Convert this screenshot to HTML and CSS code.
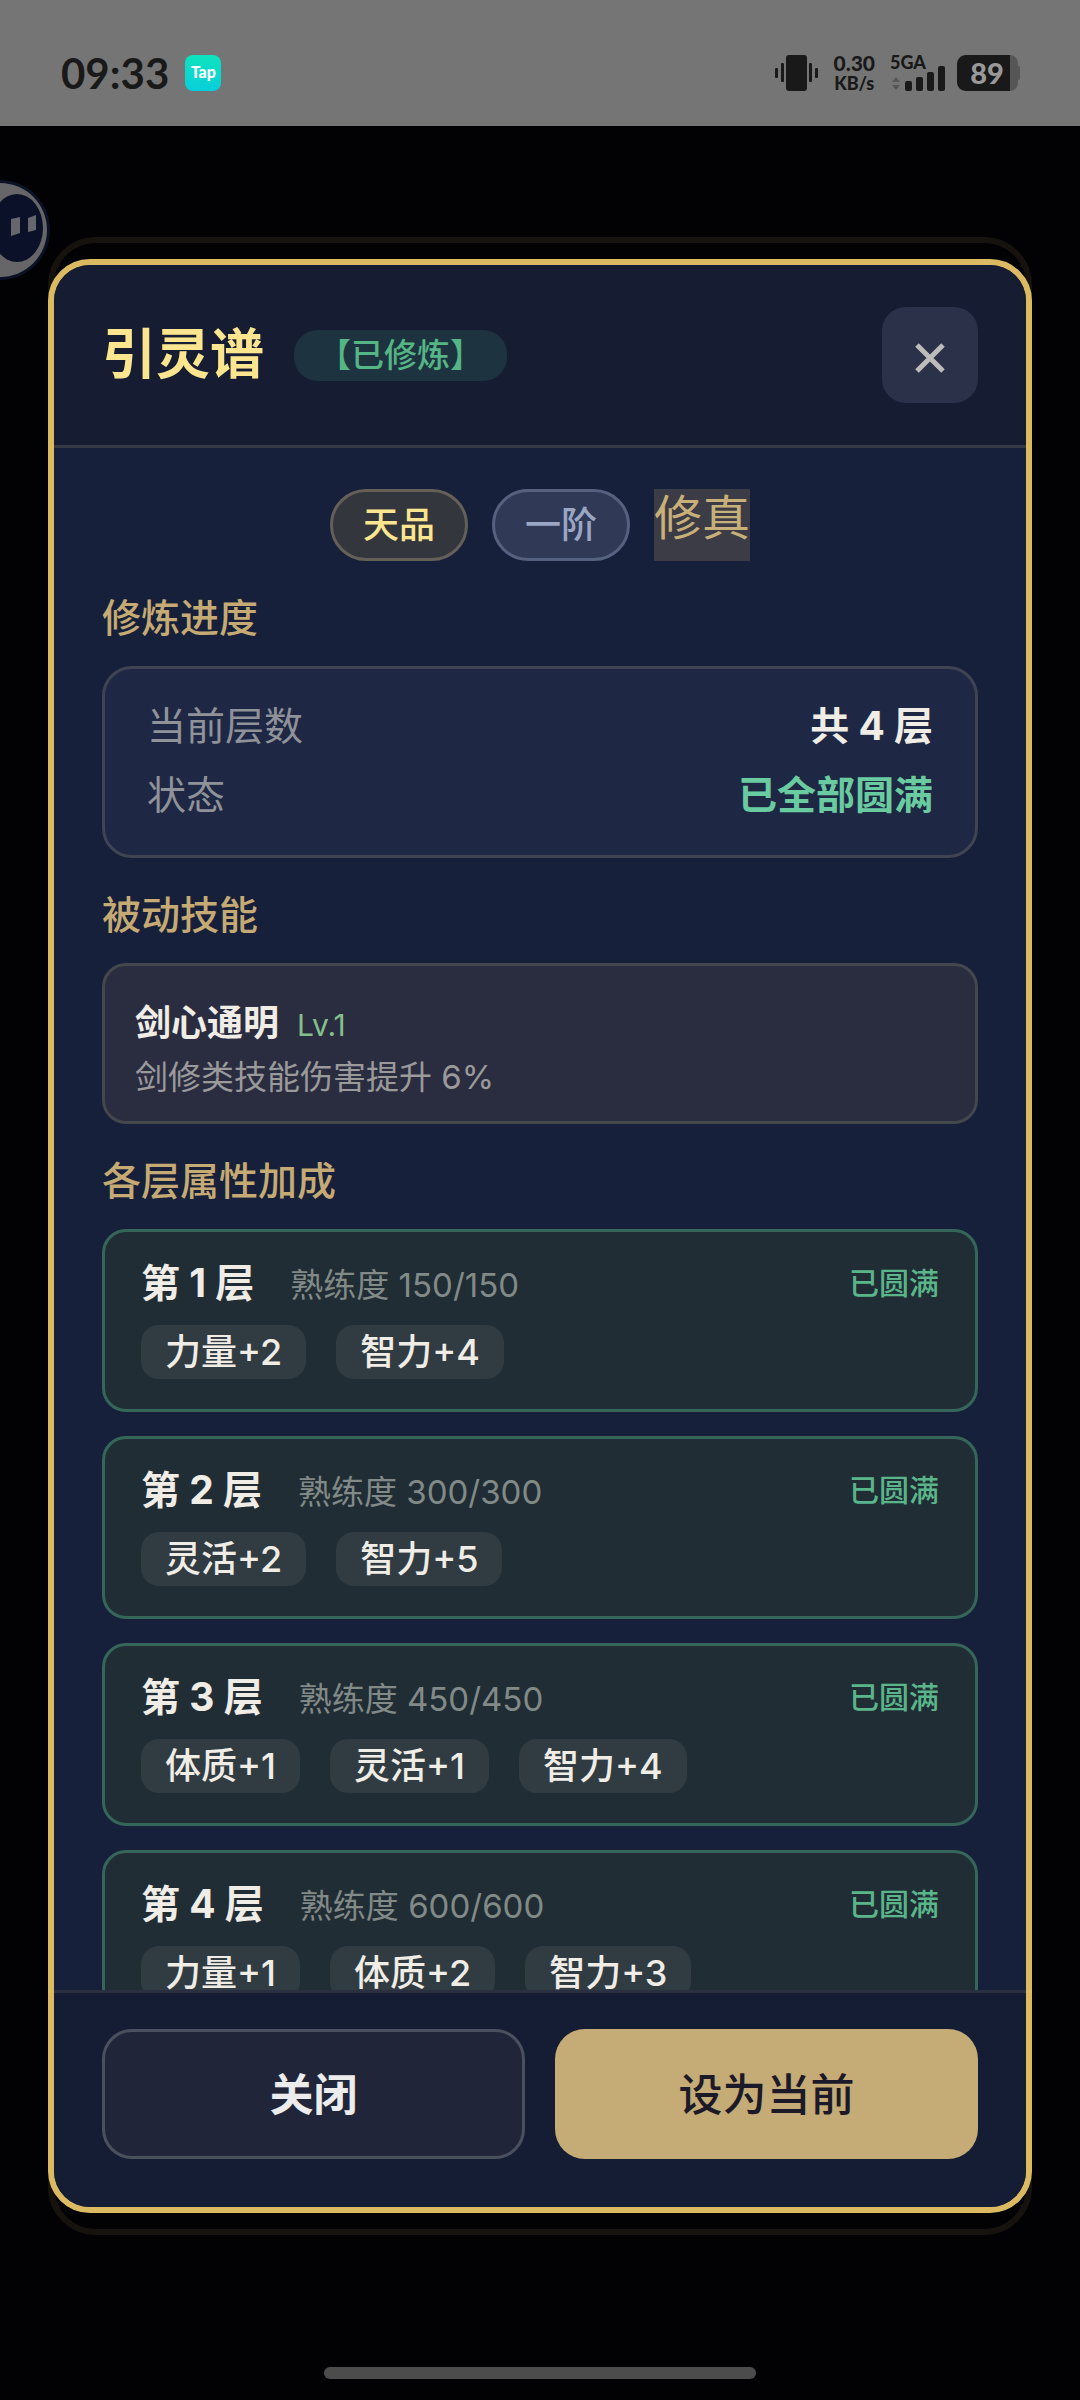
FILE: index.html
```html
<!DOCTYPE html>
<html lang="zh-CN">
<head>
<meta charset="utf-8">
<meta name="viewport" content="width=device-width, initial-scale=1">
<title>引灵谱</title>
<link rel="stylesheet" href="styles.css">
</head>
<body>
<div class="app">
  <header class="status">
    <div class="status-left">
      <time class="clock">09:33</time>
      <span class="tap">Tap</span>
    </div>
    <div class="status-right">
      <svg class="vibrate" width="44" height="36" viewBox="0 0 44 36" aria-hidden="true">
        <rect x="11" y="0" width="21" height="36" rx="3"/>
        <rect x="6" y="8" width="3" height="19" rx="1"/>
        <rect x="0" y="13" width="3" height="10" rx="1"/>
        <rect x="34" y="8" width="3" height="19" rx="1"/>
        <rect x="40" y="13" width="3" height="10" rx="1"/>
      </svg>
      <div class="speed"><span class="speed-value">0.30</span><span class="speed-unit">KB/s</span></div>
      <div class="signal">
        <span class="network">5GA</span>
        <svg width="56" height="36" viewBox="0 0 56 36" aria-hidden="true">
          <path class="dim" d="M6 22l4 5H2zM6 35l4-5H2z"/>
          <rect x="15" y="26" width="7" height="10" rx="2"/>
          <rect x="26" y="22" width="7" height="14" rx="2"/>
          <rect x="37" y="17" width="7" height="19" rx="2"/>
          <rect x="48" y="11" width="7" height="25" rx="2"/>
        </svg>
      </div>
      <div class="battery">
        <svg width="64" height="36" viewBox="0 0 64 36" aria-hidden="true">
          <path class="dim" d="M53 0c5 0 8 4 8 9v2c2 0 2 1 2 3v8c0 2 0 3-2 3v2c0 5-3 9-8 9z"/>
          <path d="M9 0h44v36H9c-5 0-9-4-9-9V9c0-5 4-9 9-9z"/>
        </svg>
        <span class="battery-level">89</span>
      </div>
    </div>
  </header>

  <div class="floater">
    <svg width="52" height="108" viewBox="0 0 52 108" aria-hidden="true">
      <circle cx="0" cy="54" r="50" fill="#0b1226"/>
      <circle cx="0" cy="54" r="47" fill="#666669"/>
      <ellipse cx="17" cy="52" rx="26" ry="34" fill="#0b1128"/>
      <path d="M11 43l9-2v16l-9 3z" fill="#66676e"/>
      <path d="M28 42l8-3v15l-8 2z" fill="#66676e"/>
    </svg>
  </div>

  <main class="overlay">
    <section class="modal" role="dialog" aria-labelledby="title">
      <header class="modal-head">
        <h1 id="title">引灵谱</h1>
        <span class="badge">【已修炼】</span>
        <button class="close" type="button" aria-label="关闭弹窗">
          <svg width="30" height="30" viewBox="0 0 30 30" aria-hidden="true"><path d="M2 2l26 26M28 2L2 28"/></svg>
        </button>
      </header>

      <div class="modal-body">
        <div class="tags">
          <span class="tag tag-gold">天品</span>
          <span class="tag tag-blue">一阶</span>
          <span class="realm">修真</span>
        </div>

        <h2>修炼进度</h2>
        <dl class="card progress">
          <div class="row"><dt>当前层数</dt><dd>共 4 层</dd></div>
          <div class="row"><dt>状态</dt><dd class="done">已全部圆满</dd></div>
        </dl>

        <h2>被动技能</h2>
        <article class="card skill">
          <div class="skill-head"><h3>剑心通明</h3><span class="level">Lv.1</span></div>
          <p>剑修类技能伤害提升 6%</p>
        </article>

        <h2>各层属性加成</h2>
        <ul class="layers">
          <li class="card layer">
            <div class="layer-head"><h3>第 1 层</h3><span class="skilled">熟练度 150/150</span><span class="full">已圆满</span></div>
            <div class="chips"><span>力量+2</span><span>智力+4</span></div>
          </li>
          <li class="card layer">
            <div class="layer-head"><h3>第 2 层</h3><span class="skilled">熟练度 300/300</span><span class="full">已圆满</span></div>
            <div class="chips"><span>灵活+2</span><span>智力+5</span></div>
          </li>
          <li class="card layer">
            <div class="layer-head"><h3>第 3 层</h3><span class="skilled">熟练度 450/450</span><span class="full">已圆满</span></div>
            <div class="chips"><span>体质+1</span><span>灵活+1</span><span>智力+4</span></div>
          </li>
          <li class="card layer">
            <div class="layer-head"><h3>第 4 层</h3><span class="skilled">熟练度 600/600</span><span class="full">已圆满</span></div>
            <div class="chips"><span>力量+1</span><span>体质+2</span><span>智力+3</span></div>
          </li>
        </ul>
      </div>

      <footer class="modal-foot">
        <button class="btn btn-plain" type="button">关闭</button>
        <button class="btn btn-gold" type="button">设为当前</button>
      </footer>
    </section>
  </main>
  <div class="home-bar"></div>
</div>
</body>
</html>
```
FILE: styles.css
```css
* {
  box-sizing: border-box;
  margin: 0;
  padding: 0;
}

body {
  background: #020204;
  color: #f0ece6;
  font-family: Inter, "Noto Sans CJK SC", sans-serif;
}

button {
  font: inherit;
}

/* Page frame */
.app {
  position: relative;
  display: flex;
  flex-direction: column;
  height: 100vh;
  overflow: hidden;
}

/* Status bar */
.status {
  display: flex;
  justify-content: space-between;
  flex: none;
  padding: 55px 59px 35px 61px;
  background: #757575;
  color: #191919;
  font-family: Lato, sans-serif;
  font-weight: 700;
}

.status-left,
.status-right {
  display: flex;
  align-items: center;
  height: 36px;
}

.status-left {
  gap: 16px;
}

.clock {
  font-size: 42px;
  line-height: 36px;
}

.tap {
  width: 36px;
  height: 36px;
  border-radius: 8px;
  background: linear-gradient(#0de3bd, #08cfdc);
  color: #fff;
  font-weight: 900;
  font-size: 16px;
  line-height: 34px;
  text-align: center;
}

.status-right svg {
  display: block;
  fill: #191919;
}

.status-right .dim {
  fill: #565656;
}

.speed {
  display: flex;
  flex-direction: column;
  align-items: center;
  margin: 0 15px 0 14px;
  font-weight: 900;
}

.speed-value {
  font-size: 21px;
  line-height: 21px;
}

.speed-unit {
  font-size: 18px;
  line-height: 21px;
}

.signal {
  position: relative;
  margin-right: 11px;
}

.network {
  position: absolute;
  top: -3px;
  left: 0;
  font-weight: 900;
  font-size: 18px;
  line-height: 20px;
}

.battery {
  position: relative;
}

.battery-level {
  position: absolute;
  inset: 0 10px 0 6px;
  color: #999;
  font-weight: 900;
  font-size: 29px;
  line-height: 36px;
  text-align: center;
}

/* Floating helper at the screen edge */
.floater {
  position: absolute;
  top: 176px;
  left: 0;
}

/* Modal */
.overlay {
  display: flex;
  flex: 1;
  min-height: 0;
  padding: 133px 48px 187px;
}

.modal {
  position: relative;
  display: flex;
  flex: 1;
  flex-direction: column;
  min-width: 0;
  border: 6px solid #dcba62;
  border-radius: 42px;
  background: #17203a;
}

/* Faint second frame behind the modal */
.modal::before {
  content: "";
  position: absolute;
  inset: -28px -6px;
  z-index: -1;
  border: 6px solid #16130f;
  border-radius: 48px;
}

.modal-head {
  display: flex;
  align-items: center;
  gap: 30px;
  padding: 42px 48px;
  border-bottom: 3px solid #343842;
  border-radius: 36px 36px 0 0;
  background: #161d33;
}

h1 {
  color: #fbe68f;
  font-weight: 700;
  font-size: 54px;
  line-height: 72px;
}

.badge {
  padding: 0 24px;
  border-radius: 24px;
  background: #1d3440;
  color: #55b585;
  font-weight: 500;
  font-size: 33px;
  line-height: 51px;
}

.close {
  display: grid;
  place-items: center;
  width: 96px;
  height: 96px;
  margin-left: auto;
  padding-top: 6px;
  border: 0;
  border-radius: 24px;
  background: #2a3149;
}

.close path {
  fill: none;
  stroke: #bdbcbb;
  stroke-width: 5;
}

.modal-body {
  flex: 1;
  min-height: 0;
  padding: 41px 48px 0;
  overflow-y: auto;
  scrollbar-width: none;
}

.tags {
  display: flex;
  justify-content: center;
  gap: 24px;
}

.tag {
  padding: 0 30px;
  border: 3px solid;
  border-radius: 36px;
  font-weight: 500;
  font-size: 36px;
  line-height: 66px;
}

.tag-gold {
  border-color: #646058;
  background: #33363c;
  color: #fbe68f;
}

.tag-blue {
  border-color: #56617f;
  background: #303a57;
  color: #9aa6c4;
}

.realm {
  background: #3c3c46;
  color: #c9b079;
  font-size: 48px;
  line-height: 57px;
}

h2 {
  padding: 34px 0 26px;
  color: #c5aa74;
  font-weight: 500;
  font-size: 39px;
  line-height: 45px;
}

.card {
  border: 3px solid #3e4452;
  border-radius: 24px;
}

.progress {
  display: grid;
  gap: 12px;
  padding: 28px 42px 32px;
  border-radius: 30px;
  background: #1e2743;
  font-size: 39px;
  line-height: 57px;
}

.row {
  display: flex;
  justify-content: space-between;
}

dt {
  color: #8f9299;
}

dd {
  font-weight: 700;
}

.done {
  color: #69cb9f;
}

.skill {
  display: grid;
  gap: 6px;
  padding: 33px 30px 20px;
  border-color: #44474c;
  background: #2a2d40;
  line-height: 48px;
}

.skill-head {
  display: flex;
  align-items: baseline;
  gap: 18px;
}

.skill h3 {
  font-weight: 700;
  font-size: 36px;
}

.level {
  color: #85bf8b;
  font-size: 30px;
  line-height: 36px;
}

.skill p {
  color: #9a9a9b;
  font-size: 33px;
}

.layers {
  display: grid;
  gap: 24px;
  list-style: none;
}

.layer {
  display: grid;
  gap: 14px;
  padding: 22px 36px 30px;
  border-color: #35665a;
  background: #202d34;
}

.layer-head {
  display: flex;
  align-items: baseline;
  gap: 36px;
  line-height: 57px;
}

.layer h3 {
  font-weight: 700;
  font-size: 39px;
}

.skilled {
  color: #828a88;
  font-size: 33px;
  line-height: 36px;
}

.full {
  align-self: center;
  margin-left: auto;
  color: #5ab58b;
  font-weight: 500;
  font-size: 30px;
  line-height: 36px;
}

.chips {
  display: flex;
  gap: 30px;
}

.chips span {
  padding: 0 24px;
  border-radius: 18px;
  background: #303c42;
  font-weight: 500;
  font-size: 36px;
  line-height: 54px;
}

.modal-foot {
  display: grid;
  grid-template-columns: 1fr 1fr;
  gap: 30px;
  padding: 36px 48px 48px;
  border-top: 3px solid #2a2f42;
  border-radius: 0 0 36px 36px;
  background: #151d34;
}

.btn {
  height: 130px;
  padding-bottom: 4px;
  border: 0;
  border-radius: 30px;
  font-weight: 700;
  font-size: 44px;
}

.btn-plain {
  border: 3px solid #4b505e;
  background: #20253a;
  color: #ececec;
}

.btn-gold {
  background: #c5ab76;
  color: #1c1a28;
  font-weight: 500;
}

.home-bar {
  position: absolute;
  bottom: 21px;
  left: 30%;
  width: 40%;
  height: 12px;
  border-radius: 6px;
  background: #4c4c4c;
}
```
